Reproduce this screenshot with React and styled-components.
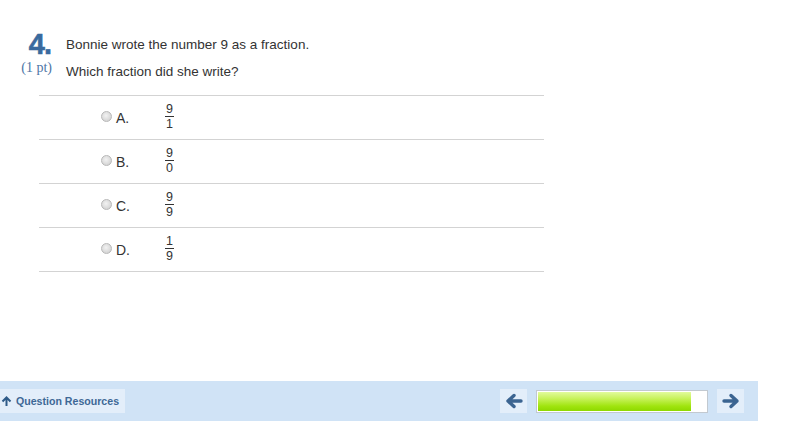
import React from 'react';
import styled, { createGlobalStyle } from 'styled-components';

const GlobalStyle = createGlobalStyle`
  html, body {
    margin: 0;
    padding: 0;
    background: #fff;
  }
  body {
    font-family: "Liberation Sans", Arial, sans-serif;
    color: #333;
  }
`;

const Page = styled.div`
  width: 800px;
  height: 445px;
  overflow: hidden;
`;

const Question = styled.div`
  display: flex;
  padding-top: 30px;
`;

const Marker = styled.div`
  width: 66px;
  display: flex;
  flex-direction: column;
  align-items: flex-end;
  padding-right: 13px;
  box-sizing: border-box;
`;

const Number = styled.div`
  font-family: "Liberation Sans", Arial, sans-serif;
  font-weight: bold;
  font-size: 29px;
  line-height: 28px;
  color: #3a6a9e;
  letter-spacing: -1px;
  margin-right: 2px;
  -webkit-text-stroke: 0.6px #3a6a9e;
`;

const Points = styled.div`
  font-family: "Liberation Serif", "Times New Roman", serif;
  font-size: 14px;
  color: #4d76a6;
  margin-top: 2px;
  margin-right: 1px;
`;

const Prompt = styled.div`
  display: flex;
  flex-direction: column;
  padding-top: 7px;
`;

const Line = styled.p`
  margin: 0 0 12px;
  font-size: 13.5px;
  line-height: 15px;
  color: #333;
`;

const Options = styled.div`
  margin: 4px 0 0 39px;
  width: 505px;
  border-top: 1px solid #d3d3d3;
`;

const Option = styled.label`
  display: flex;
  align-items: center;
  height: 43px;
  border-bottom: 1px solid #d3d3d3;
  padding-left: 62px;
  box-sizing: content-box;
`;

const Radio = styled.span`
  width: 11px;
  height: 11px;
  border-radius: 50%;
  border: 1px solid #b8b8b8;
  background: radial-gradient(circle at 45% 40%, #f2f2f2 0%, #d6d6d6 70%, #c4c4c4 100%);
  box-sizing: border-box;
  margin-right: 4px;
  margin-top: -2px;
`;

const Letter = styled.span`
  width: 49px;
  font-size: 14px;
  color: #333;
`;

const Fraction = styled.span`
  display: inline-flex;
  flex-direction: column;
  align-items: center;
  font-size: 12.5px;
  line-height: 11px;
  color: #333;
  margin-top: -2px;
`;

const Num = styled.span`
  padding: 0 1px 1px;
  border-bottom: 1px solid #333;
`;

const Den = styled.span`
  padding-top: 2px;
`;

const Footer = styled.div`
  margin-top: 109px;
  width: 758px;
  height: 40px;
  background: #d0e3f6;
  display: flex;
  align-items: center;
  justify-content: space-between;
  padding-right: 14px;
  box-sizing: border-box;
`;

const Resources = styled.button`
  height: 24px;
  width: 125px;
  border: none;
  background: #e3eefa;
  color: #3e6896;
  font-family: "Liberation Sans", Arial, sans-serif;
  font-weight: bold;
  font-size: 10.6px;
  display: flex;
  align-items: center;
  gap: 4px;
  padding: 0 0 0 1px;
  cursor: pointer;
`;

const Nav = styled.div`
  display: flex;
  align-items: center;
  gap: 9px;
`;

const ArrowBox = styled.button`
  width: 27px;
  height: 24px;
  border: none;
  background: #e3eefa;
  padding: 0;
  display: flex;
  align-items: center;
  justify-content: center;
  cursor: pointer;
`;

const Progress = styled.div`
  width: 172px;
  height: 23px;
  border: 1px solid #c2c9d0;
  background: #fff;
  box-sizing: border-box;
  padding: 1px;
  display: flex;
`;

const Fill = styled.div`
  height: 100%;
  background: linear-gradient(to bottom, #e2fb9c 0%, #c7f25a 35%, #9fe40e 75%, #8ed800 100%);
`;

const Arrow = ({ dir }) => (
  <svg width="18" height="16" viewBox="0 0 18 16">
    <g transform={dir === 'left' ? 'scale(-1,1) translate(-18,0)' : undefined}>
      <path d="M2 8 H15 M9 2.5 L15 8 L9 13.5" stroke="#3b6491" strokeWidth="3.4" fill="none" strokeLinecap="round" strokeLinejoin="round" />
    </g>
  </svg>
);

const choices = [
  { letter: 'A.', n: '9', d: '1' },
  { letter: 'B.', n: '9', d: '0' },
  { letter: 'C.', n: '9', d: '9' },
  { letter: 'D.', n: '1', d: '9' },
];

export default function App() {
  return (
    <Page>
      <GlobalStyle />
      <Question>
        <Marker>
          <Number>4.</Number>
          <Points>(1 pt)</Points>
        </Marker>
        <Prompt>
          <Line>Bonnie wrote the number 9 as a fraction.</Line>
          <Line>Which fraction did she write?</Line>
        </Prompt>
      </Question>
      <Options>
        {choices.map((c) => (
          <Option key={c.letter}>
            <Radio />
            <Letter>{c.letter}</Letter>
            <Fraction>
              <Num>{c.n}</Num>
              <Den>{c.d}</Den>
            </Fraction>
          </Option>
        ))}
      </Options>
      <Footer>
        <Resources>
          <svg width="11" height="11" viewBox="0 0 11 11">
            <path d="M5.5 10 V2 M1.5 5.5 L5.5 1.5 L9.5 5.5" stroke="#2f5b88" strokeWidth="2" fill="none" />
          </svg>
          Question Resources
        </Resources>
        <Nav>
          <ArrowBox><Arrow dir="left" /></ArrowBox>
          <Progress>
            <Fill style={{ width: `${(153 / 168) * 100}%` }} />
          </Progress>
          <ArrowBox><Arrow dir="right" /></ArrowBox>
        </Nav>
      </Footer>
    </Page>
  );
}
